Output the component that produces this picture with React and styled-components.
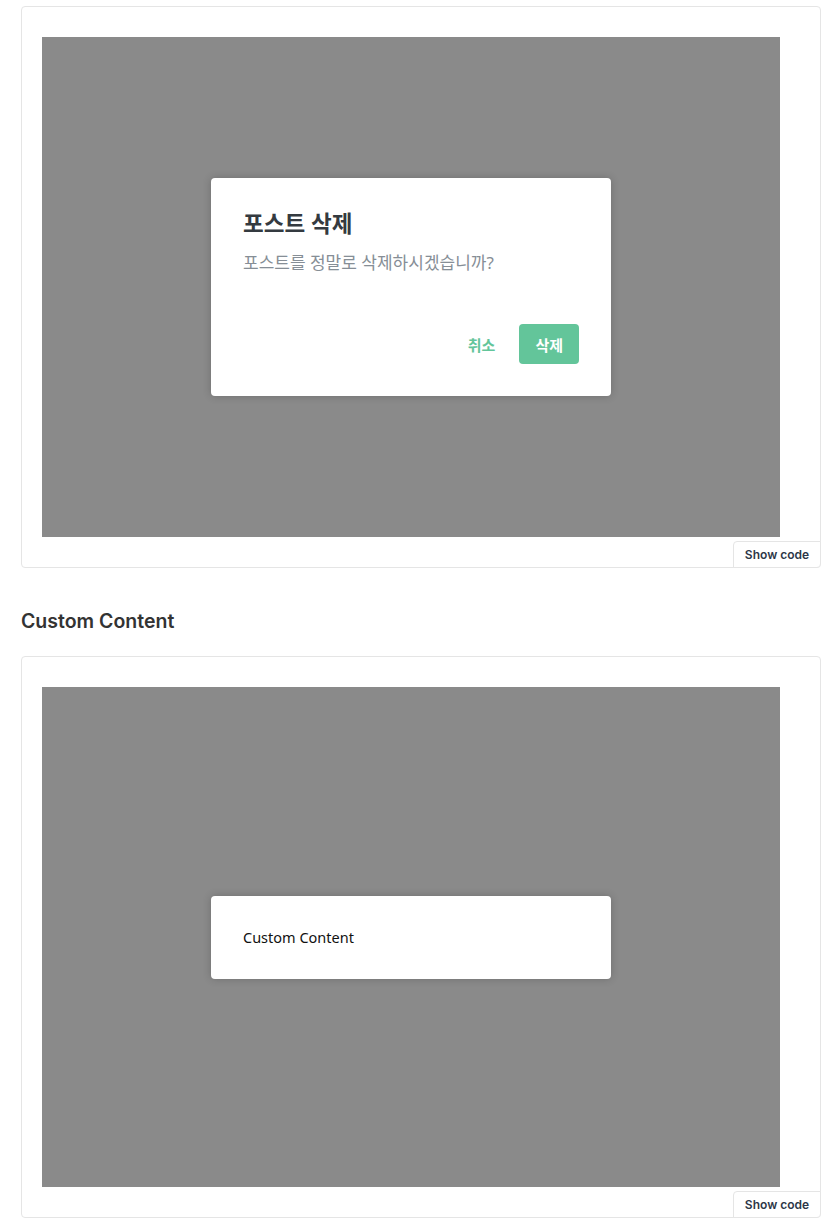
import React from 'react';
import styled, { createGlobalStyle } from 'styled-components';

const GlobalStyle = createGlobalStyle`
  body {
    margin: 0;
    background: #fff;
    font-family: Inter, 'Noto Sans', 'Noto Sans CJK KR', sans-serif;
  }
`;

const Page = styled.div`
  padding: 6px 15px 0 21px;
  width: 800px;
`;

const Playground = styled.div`
  position: relative;
  border: 1px solid #e5e5e5;
  border-radius: 4px;
  padding: 30px 40px 30px 20px;
`;

const Stage = styled.div`
  height: 500px;
  background: #8a8a8a;
  display: flex;
  align-items: center;
  justify-content: center;
`;

const ShowCode = styled.button`
  position: absolute;
  right: -1px;
  bottom: -1px;
  width: 88px;
  height: 27px;
  padding: 0;
  background: #fff;
  border: 1px solid #e5e5e5;
  border-radius: 4px 0 4px 0;
  font-family: Inter, sans-serif;
  font-size: 12px;
  font-weight: 600;
  color: #2d3748;
`;

const SectionTitle = styled.h2`
  margin: 41px 0 23px;
  font-family: Inter, sans-serif;
  font-size: 19.5px;
  line-height: 24px;
  font-weight: 600;
  color: #333;
`;

const Dialog = styled.div`
  width: 400px;
  box-sizing: border-box;
  padding: 32px;
  background: #fff;
  border-radius: 4px;
  box-shadow: 0 0 8px rgba(0, 0, 0, 0.2);
  font-family: 'Noto Sans', 'Noto Sans CJK KR', sans-serif;
`;

const Title = styled.h3`
  margin: 0;
  font-size: 22.5px;
  line-height: 28px;
  font-weight: 700;
  color: #343a40;
`;

const Message = styled.p`
  margin: 13px 0 0;
  font-size: 17px;
  line-height: 24px;
  color: #868e96;
`;

const Buttons = styled.div`
  margin-top: 49px;
  display: flex;
  justify-content: flex-end;
  gap: 8px;
`;

const Button = styled.button`
  height: 40px;
  padding: 0 16px;
  border: none;
  border-radius: 4px;
  font-family: 'Noto Sans CJK KR', sans-serif;
  font-size: 15px;
  font-weight: 700;
  background: ${(props) => (props.$primary ? '#63c59a' : 'transparent')};
  color: ${(props) => (props.$primary ? '#fff' : '#63c59a')};
`;

const CustomText = styled.div`
  font-size: 14.5px;
  line-height: 19px;
  color: #111;
`;

export default function App() {
  return (
    <>
      <GlobalStyle />
      <Page>
        <Playground>
          <Stage>
            <Dialog>
              <Title>포스트 삭제</Title>
              <Message>포스트를 정말로 삭제하시겠습니까?</Message>
              <Buttons>
                <Button>취소</Button>
                <Button $primary>삭제</Button>
              </Buttons>
            </Dialog>
          </Stage>
          <ShowCode>Show code</ShowCode>
        </Playground>

        <SectionTitle>Custom Content</SectionTitle>

        <Playground>
          <Stage>
            <Dialog>
              <CustomText>Custom Content</CustomText>
            </Dialog>
          </Stage>
          <ShowCode>Show code</ShowCode>
        </Playground>
      </Page>
    </>
  );
}
